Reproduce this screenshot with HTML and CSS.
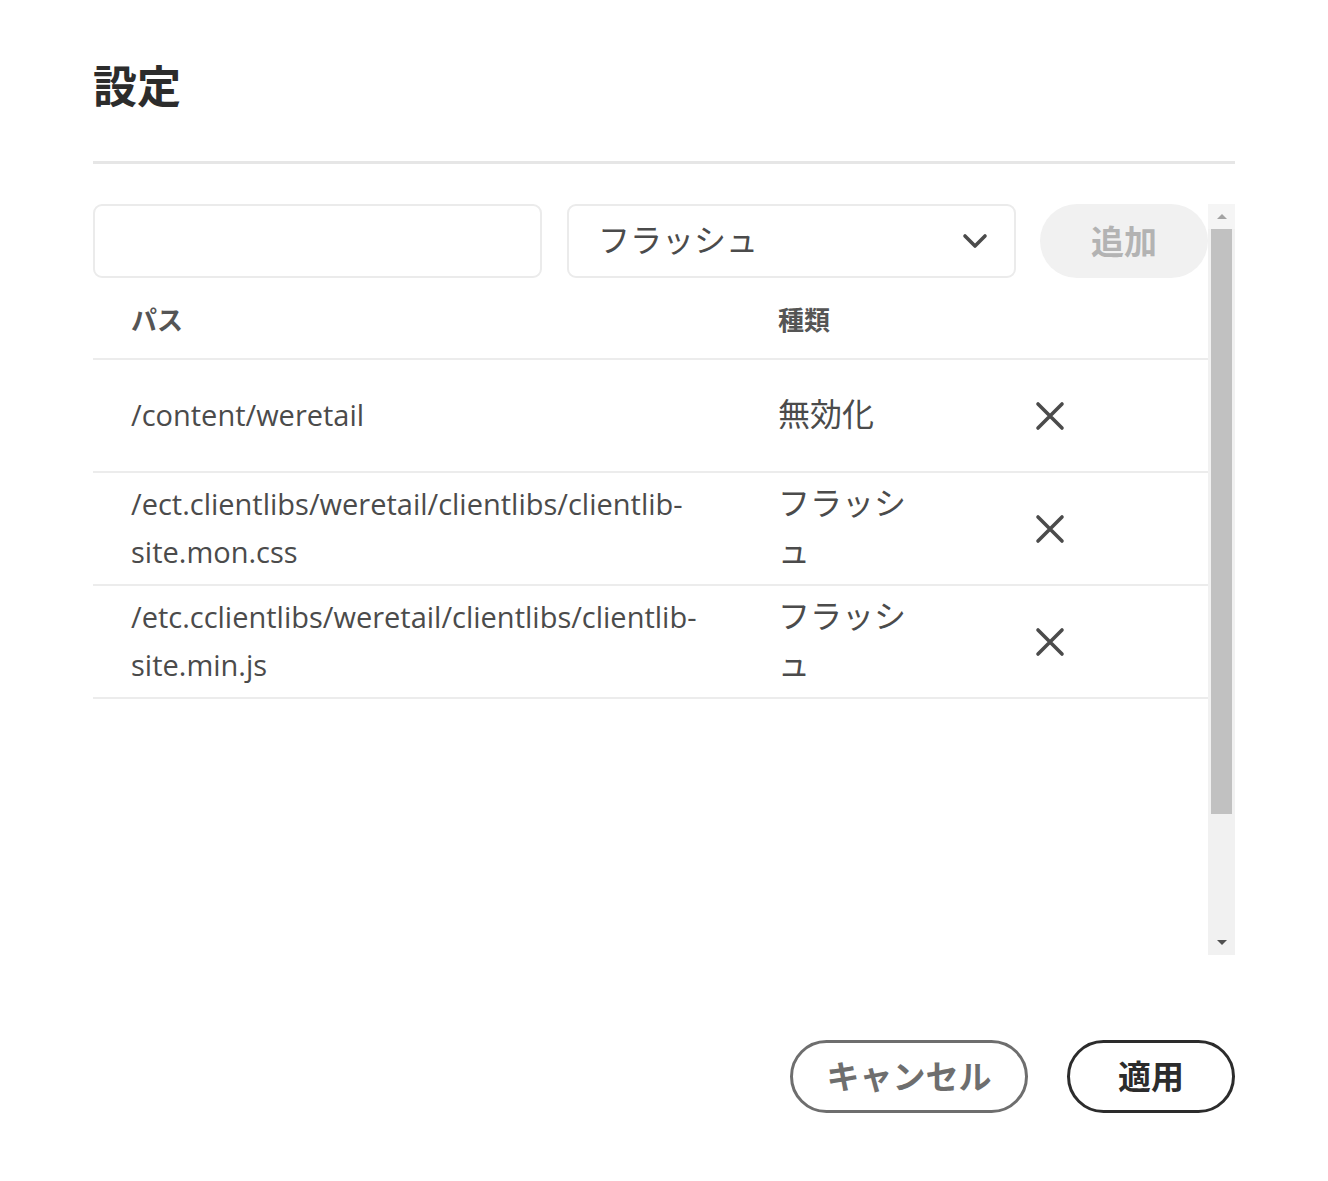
FILE: index.html
```html
<!DOCTYPE html>
<html lang="ja">
<head>
<meta charset="utf-8">
<title>設定</title>
<link rel="stylesheet" href="styles.css">
</head>
<body>
<div class="dialog">
  <h1 class="title">設定</h1>
  <div class="divider"></div>
  <div class="content">
    <div class="main">
      <div class="toolbar">
        <div class="field"></div>
        <div class="select">
          <span class="select-value">フラッシュ</span>
          <svg class="chevron" width="26" height="16" viewBox="0 0 26 16"><polyline points="3,3 13,13 23,3" fill="none" stroke="#4b4b4b" stroke-width="3.6" stroke-linecap="round" stroke-linejoin="round"/></svg>
        </div>
        <button class="add-btn">追加</button>
      </div>
      <div class="thead">
        <div class="th th-path">パス</div>
        <div class="th th-type">種類</div>
      </div>
      <div class="row">
        <div class="cell-path">/content/weretail</div>
        <div class="cell-type">無効化</div>
        <div class="cell-del"><svg width="30" height="30" viewBox="0 0 30 30"><path d="M3 3 L27 27 M27 3 L3 27" stroke="#4b4b4b" stroke-width="3.6" stroke-linecap="round"/></svg></div>
      </div>
      <div class="row">
        <div class="cell-path">/ect.clientlibs/weretail/clientlibs/clientlib-site.mon.css</div>
        <div class="cell-type">フラッシュ</div>
        <div class="cell-del"><svg width="30" height="30" viewBox="0 0 30 30"><path d="M3 3 L27 27 M27 3 L3 27" stroke="#4b4b4b" stroke-width="3.6" stroke-linecap="round"/></svg></div>
      </div>
      <div class="row">
        <div class="cell-path">/etc.cclientlibs/weretail/clientlibs/clientlib-site.min.js</div>
        <div class="cell-type">フラッシュ</div>
        <div class="cell-del"><svg width="30" height="30" viewBox="0 0 30 30"><path d="M3 3 L27 27 M27 3 L3 27" stroke="#4b4b4b" stroke-width="3.6" stroke-linecap="round"/></svg></div>
      </div>
    </div>
    <div class="scrollbar">
      <div class="sb-btn"><span class="tri-up"></span></div>
      <div class="sb-thumb"></div>
      <div class="sb-rest"></div>
      <div class="sb-btn sb-btn-down"><span class="tri-down"></span></div>
    </div>
  </div>
  <div class="footer">
    <button class="btn btn-cancel">キャンセル</button>
    <button class="btn btn-apply">適用</button>
  </div>
</div>
</body>
</html>
```

FILE: styles.css
```css
* { box-sizing: border-box; }
html, body { margin: 0; padding: 0; background: #fff; }
body {
  font-family: "Open Sans", "Noto Sans CJK JP", sans-serif;
  color: #4b4b4b;
}
.dialog {
  width: 1328px;
  height: 1181px;
  padding: 62px 93px 0 93px;
}
.title {
  margin: 0;
  font-family: "Noto Sans CJK JP", sans-serif;
  font-size: 44px;
  line-height: 44px;
  font-weight: 700;
  color: #2c2c2c;
  height: 44px;
}
.divider {
  margin-top: 55px;
  height: 3px;
  background: #e6e6e6;
}
.content {
  margin-top: 40px;
  height: 751px;
  display: flex;
}
.main {
  width: 1115px;
  display: flex;
  flex-direction: column;
}
.toolbar {
  display: flex;
  height: 74px;
  gap: 25px;
}
.field {
  width: 449px;
  height: 74px;
  border: 2px solid #ebebeb;
  border-radius: 9px;
  background: #fff;
}
.select {
  width: 449px;
  height: 74px;
  border: 2px solid #ebebeb;
  border-radius: 9px;
  display: flex;
  align-items: center;
  justify-content: space-between;
  padding: 0 26px 0 29px;
}
.select-value {
  font-family: "Noto Sans CJK JP", sans-serif;
  font-size: 32px;
  color: #4b4b4b;
  font-weight: 400;
  padding-bottom: 6px;
}
.chevron { margin-top: 0; }
.add-btn {
  width: 168px;
  height: 74px;
  margin-left: -1px;
  border: none;
  border-radius: 37px;
  background: #f1f1f1;
  color: #b3b3b3;
  font-family: "Noto Sans CJK JP", sans-serif;
  font-size: 33px;
  font-weight: 700;
  padding: 0 0 2px 0;
}
.thead {
  display: flex;
  align-items: center;
  height: 82px;
  border-bottom: 2px solid #ececec;
  padding-left: 38px;
  font-family: "Noto Sans CJK JP", sans-serif;
  font-size: 26px;
  font-weight: 700;
  color: #555;
}
.th-path { width: 647px; }
.row {
  display: grid;
  grid-template-columns: 647px 150px 1fr;
  align-items: center;
  height: 113px;
  border-bottom: 2px solid #ececec;
  padding-left: 38px;
  line-height: 48px;
}
.cell-path {
  font-family: "Open Sans", sans-serif;
  font-size: 29px;
  color: #4b4b4b;
  padding-right: 40px;
  padding-bottom: 2px;
}
.cell-type {
  font-family: "Noto Sans CJK JP", sans-serif;
  font-size: 32px;
  color: #4b4b4b;
  padding-bottom: 7px;
}
.cell-del {
  padding-left: 107px;
  display: flex;
  align-items: center;
}
.scrollbar {
  width: 27px;
  display: flex;
  flex-direction: column;
  background: #f1f1f1;
}
.sb-btn {
  height: 25px;
  display: flex;
  align-items: center;
  justify-content: center;
  background: #f5f5f5;
}
.sb-btn-down { background: #f1f1f1; }
.tri-up {
  width: 0; height: 0;
  border-left: 5px solid transparent;
  border-right: 5px solid transparent;
  border-bottom: 5px solid #a3a3a3;
}
.tri-down {
  width: 0; height: 0;
  border-left: 5px solid transparent;
  border-right: 5px solid transparent;
  border-top: 5px solid #505050;
}
.sb-thumb {
  height: 585px;
  margin: 0 3px;
  background: #c1c1c1;
}
.sb-rest { flex: 1; }
.footer {
  margin-top: 85px;
  display: flex;
  justify-content: flex-end;
  gap: 39px;
}
.btn {
  height: 73px;
  border-radius: 37px;
  background: #fff;
  font-family: "Noto Sans CJK JP", sans-serif;
  font-size: 33px;
  font-weight: 700;
  padding: 0 0 3px 0;
}
.btn-cancel {
  width: 238px;
  border: 3px solid #6e6e6e;
  color: #6e6e6e;
}
.btn-apply {
  width: 168px;
  border: 3px solid #2c2c2c;
  color: #2c2c2c;
}
```
